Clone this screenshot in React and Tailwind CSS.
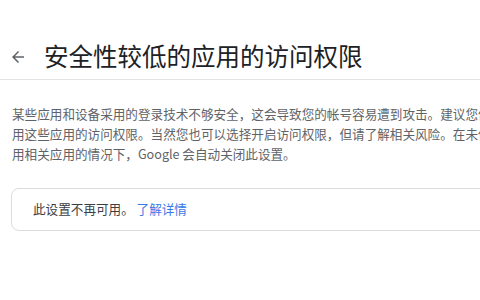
const font = { fontFamily: '"Noto Sans CJK SC", "Noto Sans", Roboto, sans-serif' };

function BackArrow() {
  return (
    <svg width="18" height="18" viewBox="0 0 24 24" className="text-[#5f6368]">
      <path fill="currentColor" d="M20 11H7.83l5.59-5.59L12 4l-8 8 8 8 1.41-1.41L7.83 13H20v-2z" />
    </svg>
  );
}

export default function App() {
  return (
    <div className="w-[480px] h-[300px] bg-white overflow-hidden" style={font}>
      {/* Header */}
      <div className="h-[80px] flex items-center pt-[34px] border-b border-[#e3e3e3]">
        <div className="pl-[9px] w-[44px] flex items-center">
          <BackArrow />
        </div>
        <h1 className="text-[24.5px] leading-none text-[#202124] whitespace-nowrap">安全性较低的应用的访问权限</h1>
      </div>

      {/* Description */}
      <div className="mt-[24px] pl-[12px] text-[12.6px] leading-[20px] text-[#5f6368] whitespace-nowrap">
        <p>某些应用和设备采用的登录技术不够安全，这会导致您的帐号容易遭到攻击。建议您停</p>
        <p>用这些应用的访问权限。当然您也可以选择开启访问权限，但请了解相关风险。在未使</p>
        <p>用相关应用的情况下，Google 会自动关闭此设置。</p>
      </div>

      {/* Notice card */}
      <div className="mt-[24px] ml-[11px] w-[500px] h-[43px] border border-[#dadce0] rounded-[8px] flex items-center pl-[21px]">
        <span className="text-[12.6px] text-[#3c4043] whitespace-nowrap">
          此设置不再可用。 <a className="text-[#3b78e7]">了解详情</a>
        </span>
      </div>
    </div>
  );
}
